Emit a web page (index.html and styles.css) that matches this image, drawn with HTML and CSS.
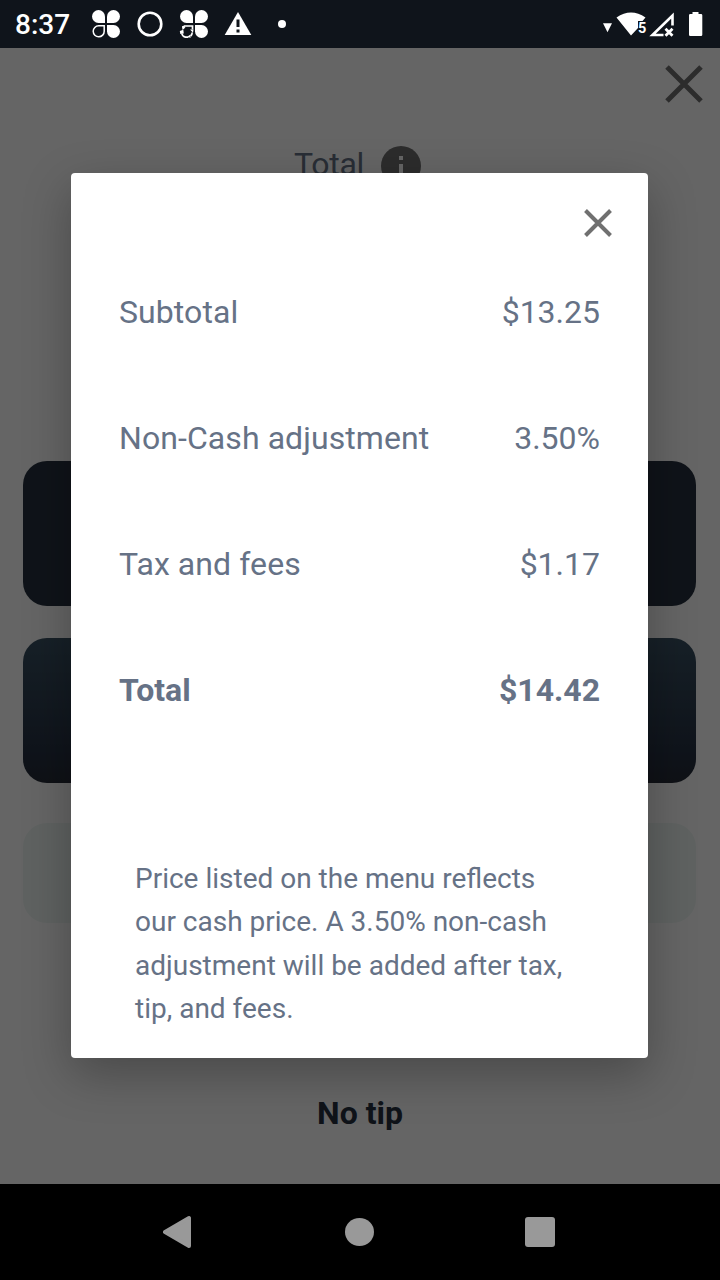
FILE: index.html
```
<!DOCTYPE html>
<html lang="en">
<head>
<meta charset="UTF-8">
<title>Checkout – Price details</title>
<meta name="viewport" content="width=device-width,initial-scale=1">
<link rel="stylesheet" href="styles.css">
</head>
<body>

<header class="status-bar">
  <span class="clock">8:37</span>
  <svg class="status-icons" width="200" height="48" viewBox="90 0 200 48">
    <g fill="#fff">
      <path d="M105 23h-6.500a6.500 6.500 0 1 1 6.500-6.500z"/>
      <path d="M107 23v-6.500a6.500 6.500 0 1 1 6.500 6.500z"/>
      <path d="M107 25h6.500a6.500 6.500 0 1 1-6.500 6.500z"/>
    </g>
    <path d="M104.200 25.800v5.400a5.500 5.500 0 1 1-5.500-5.400z" fill="none" stroke="#fff" stroke-width="1.500"/>
    <circle cx="150" cy="24" r="11.300" fill="none" stroke="#fff" stroke-width="2.600"/>
    <g fill="#fff">
      <path d="M193 23h-6.500a6.500 6.500 0 1 1 6.500-6.500z"/>
      <path d="M195 23v-6.500a6.500 6.500 0 1 1 6.500 6.500z"/>
      <path d="M195 25h6.500a6.500 6.500 0 1 1-6.500 6.500z"/>
    </g>
    <path d="M182.500 27.500l2-1.500h8v3.500M192.200 32.500c0 1.500-.6 2.700-1.600 3.500M188.500 37.200h-3c-1.800-.4-3.200-1.700-3.700-3.600" fill="none" stroke="#fff" stroke-width="1.700"/>
    <path d="M179.800 31l3.500-1.200.5 3.700-3.500.5zM190 29.500h3.500l-.5 3.200zM182 26l3.500 1.500-3 2.500zM190.500 34.500v3.500l-3-1.500z" fill="#fff"/>
    <path d="M238 12l13.300 23h-26.600z" fill="#fff"/>
    <path d="M236.500 19.500h3v7.500h-3zM236.500 29.500h3v3h-3z" fill="#0f141b"/>
    <circle cx="282" cy="24" r="4" fill="#fff"/>
  </svg>
  <svg class="signal-icons" width="110" height="48" viewBox="600 0 110 48">
    <path d="M603 23.300h9l-4.500 9z" fill="#fff"/>
    <path d="M616.500 17.500Q631 7.500 645.500 17.500L642.500 21H638V28L631 35.500z" fill="#fff"/>
    <text class="wifi-label" x="638" y="33">5</text>
    <path d="M663.500 35H652.500L672.500 15.500V25.500" fill="none" stroke="#fff" stroke-width="2.600"/>
    <path d="M665.500 28.800l7 7M672.500 28.800l-7 7" stroke="#fff" stroke-width="2.800"/>
    <path d="M692.500 12h6v2h2.500a1.300 1.300 0 0 1 1.300 1.300v19.400a1.300 1.300 0 0 1-1.300 1.300h-10.700a1.300 1.300 0 0 1-1.300-1.300V15.300a1.300 1.300 0 0 1 1.300-1.300h2.200z" fill="#fff"/>
  </svg>
</header>

<main class="screen">
  <div class="top-row">
    <svg class="page-close" width="38" height="38" viewBox="0 0 38 38"><path d="M2 2l34 34M36 2L2 36"/></svg>
  </div>
  <div class="total-row">
    <span>Total</span>
    <svg width="40" height="40" viewBox="0 0 40 40"><circle cx="20" cy="20" r="20" fill="#707070"/><path d="M18 10h4v4h-4zM18 18h4v12h-4z" fill="#fff"/></svg>
  </div>
  <div class="tips">
    <div class="tip"></div>
    <div class="tip tip-alt"></div>
    <div class="tip-custom"></div>
  </div>
  <div class="no-tip">No tip</div>

  <div class="scrim">
    <section class="dialog">
      <div class="dialog-head">
        <svg width="28" height="28" viewBox="0 0 28 28"><path d="M1.500 1.500l25 25M26.500 1.500l-25 25"/></svg>
      </div>
      <dl class="lines">
        <div class="line"><dt>Subtotal</dt><dd>$13.25</dd></div>
        <div class="line"><dt>Non-Cash adjustment</dt><dd>3.50%</dd></div>
        <div class="line"><dt>Tax and fees</dt><dd>$1.17</dd></div>
        <div class="line line-total"><dt>Total</dt><dd>$14.42</dd></div>
      </dl>
      <p class="note">Price listed on the menu reflects<br>our cash price. A 3.50% non-cash<br>adjustment will be added after tax,<br>tip, and fees.</p>
    </section>
  </div>
</main>

<nav class="nav-bar">
  <svg width="28" height="34" viewBox="0 0 28 34"><path d="M2 17L26 3v28z" fill="#999" stroke="#999" stroke-width="4" stroke-linejoin="round"/></svg>
  <span class="nav-home"></span>
  <span class="nav-recent"></span>
</nav>

</body>
</html>
```
FILE: styles.css
```
*{margin:0;padding:0;box-sizing:border-box}
body{width:720px;height:1280px;overflow:hidden;display:flex;flex-direction:column;background:#000;font-family:Roboto,"Liberation Sans",sans-serif;color:#667286}
svg{display:block;flex:none}

.status-bar{height:48px;display:flex;align-items:center;background:#0f141b;padding:0 10px 0 15px}
.clock{width:75px;color:#fff;font-size:28px;font-weight:500;line-height:48px;padding-top:2px}
.signal-icons{margin-left:auto}
.wifi-label{fill:#fff;font-size:14.500px;font-weight:700}

.screen{position:relative;height:1136px;background:#fff;display:flex;flex-direction:column}
.top-row{display:flex;justify-content:flex-end;padding:17px 17px 0 0}
.page-close path{stroke:#707070;stroke-width:5}
.total-row{display:flex;justify-content:center;align-items:center;gap:17px;margin-top:43px;padding-right:5px;font-size:32px;line-height:36px;letter-spacing:-.3px}
.total-row span{padding-bottom:4px}
.tips{display:flex;flex-direction:column;padding:275px 24px 0 23px}
.tip{height:145px;border-radius:24px;background:#27323f;margin-bottom:32px}
.tip-alt{background:linear-gradient(#3a5264,#273244 80%,#272d38);margin-bottom:40px}
.tip-custom{height:100px;border-radius:24px;background:#f0f8f5}
.no-tip{margin-top:170px;text-align:center;font-size:32px;font-weight:700;line-height:40px;color:#27323f}

.scrim{position:absolute;inset:0;background:rgba(0,0,0,.605);padding:125px 72px 0 71px}
.dialog{height:885px;background:#fff;border-radius:4px;box-shadow:0 16px 48px rgba(0,0,0,.28)}
.dialog-head{display:flex;justify-content:flex-end;padding:36px 36px 0}
.dialog-head path{stroke:#707070;stroke-width:4}
.lines{padding:53px 48px 0;font-size:32px;line-height:44px}
.line{display:flex;justify-content:space-between;margin-bottom:82px}
.line dt{letter-spacing:.08px}
.line-total{font-weight:700}
.line-total dt{letter-spacing:0}
.note{padding:63px 64px 0;font-size:28px;line-height:43.400px;white-space:nowrap}

.nav-bar{height:96px;background:#000;display:flex;align-items:center;padding-left:163px}
.nav-home{width:29px;height:28px;border-radius:50%;background:#999;margin-left:154px}
.nav-recent{width:30px;height:30px;border-radius:3px;background:#999;margin-left:151px}
```
